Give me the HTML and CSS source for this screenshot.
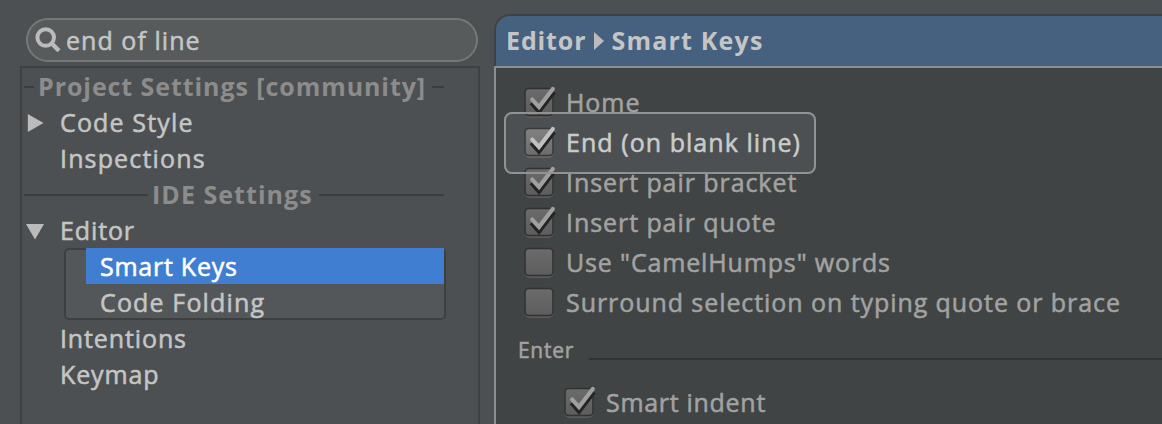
FILE: index.html
```html
<!DOCTYPE html>
<html lang="en">
<head>
<meta charset="utf-8">
<title>Settings</title>
<link rel="stylesheet" href="styles.css">
</head>
<body>
<svg class="defs" width="0" height="0" aria-hidden="true">
  <defs>
    <linearGradient id="face" x1="0" y1="0" x2="0" y2="1"><stop offset="0" stop-color="#6b6b6b"/><stop offset="1" stop-color="#5d5d5d"/></linearGradient>
    <linearGradient id="face-lit" x1="0" y1="0" x2="0" y2="1"><stop offset="0" stop-color="#818181"/><stop offset="1" stop-color="#6c6c6c"/></linearGradient>
    <symbol id="box" viewBox="0 0 34 34">
      <rect x="0.5" y="5" width="29" height="28" rx="5" fill="#595b5c"/>
      <rect x="1" y="3.5" width="28" height="27" rx="4" fill="url(#face)" stroke="#323232" stroke-width="1.6"/>
    </symbol>
    <symbol id="box-lit" viewBox="0 0 34 34">
      <rect x="0.5" y="5" width="29" height="28" rx="5" fill="#646768"/>
      <rect x="1" y="3.5" width="28" height="27" rx="4" fill="url(#face-lit)" stroke="#3a3a3a" stroke-width="1.6"/>
    </symbol>
    <symbol id="tick" viewBox="0 0 34 34">
      <path d="M7.3 17.9L15 26.6L30 6.8" fill="none" stroke="#242424" stroke-width="4.4"/>
      <path d="M8.2 14.6L15 22L28.8 4" fill="none" stroke="currentColor" stroke-width="4.2" stroke-linecap="round"/>
    </symbol>
  </defs>
</svg>
<div class="window">
  <aside class="side">
    <div class="search">
      <svg class="lens" width="26" height="26" viewBox="0 0 26 26"><circle cx="10.7" cy="10.5" r="8.3" fill="none" stroke="#bbb" stroke-width="4"/><path d="M16.3 16L24 23.8" stroke="#bbb" stroke-width="4.4"/></svg>
      <span>end of line</span>
    </div>
    <div class="tree">
      <div class="group project"><i class="rule stub"></i><span>Project Settings [community]</span><i class="rule"></i></div>
      <div class="node wide"><svg class="arrow" width="18" height="18" viewBox="0 0 18 18"><path d="M1.8 0L17.5 9L1.8 18Z" fill="#bbb"/></svg><span>Code Style</span></div>
      <div class="node wide"><span>Inspections</span></div>
      <div class="group ide"><i class="rule"></i><span>IDE Settings</span><i class="rule"></i></div>
      <div class="node"><svg class="arrow" width="18" height="18" viewBox="0 0 18 18"><path d="M0 2L18 2L9 17.5Z" fill="#bbb"/></svg><span>Editor</span></div>
      <div class="children">
        <div class="child selected">Smart Keys</div>
        <div class="child wide">Code Folding</div>
      </div>
      <div class="node"><span>Intentions</span></div>
      <div class="node"><span>Keymap</span></div>
    </div>
  </aside>
  <main class="panel">
    <header class="title"><span>Editor</span><svg width="10" height="18" viewBox="0 0 10 18"><path d="M0 0L10 9L0 18Z" fill="#bbb"/></svg><span class="crumb">Smart Keys</span></header>
    <div class="body">
      <label class="option"><svg class="check"><use href="#box"/><use href="#tick"/></svg><span>Home</span></label>
      <label class="option lit"><svg class="check"><use href="#box-lit"/><use href="#tick"/></svg><span>End (on blank line)</span></label>
      <label class="option"><svg class="check"><use href="#box"/><use href="#tick"/></svg><span>Insert pair bracket</span></label>
      <label class="option"><svg class="check"><use href="#box"/><use href="#tick"/></svg><span>Insert pair quote</span></label>
      <label class="option tight"><svg class="check"><use href="#box"/></svg><span>Use "CamelHumps" words</span></label>
      <label class="option"><svg class="check"><use href="#box"/></svg><span>Surround selection on typing quote or brace</span></label>
      <div class="section"><span>Enter</span><i></i></div>
      <label class="option nested"><svg class="check"><use href="#box"/><use href="#tick"/></svg><span>Smart indent</span></label>
    </div>
  </main>
</div>
</body>
</html>
```
FILE: styles.css
```css
* { box-sizing: border-box; }
body { margin: 0; background: #4c5052; }
.defs { position: absolute; }
.window {
  display: flex;
  width: 1162px;
  height: 424px;
  overflow: hidden;
  background: #4c5052;
  color: #c5c5c5;
  font: 25px/36px "Open Sans", "Noto Sans", sans-serif;
  letter-spacing: 0.88px;
  white-space: nowrap;
  -webkit-text-stroke: 0.55px currentColor;
}
.side { width: 494px; flex: none; padding: 18px 14px 0 20px; display: flex; flex-direction: column; }
.search {
  display: flex;
  align-items: center;
  width: 452px;
  height: 44px;
  margin-left: 6px;
  padding-left: 7px;
  gap: 5px;
  border: 2px solid #777;
  border-radius: 22px;
  background: #575b5b;
  letter-spacing: 1.05px;
}
.tree { width: 460px; flex: 1; margin-top: 4px; border: 2px solid #414141; border-bottom: 0; }
.group { display: flex; align-items: center; height: 36px; margin: 0 34px 0 2px; color: #8c8c8c; font-weight: 700; -webkit-text-stroke: 0; }
.project { letter-spacing: 0.93px; }
.ide { letter-spacing: 1.05px; }
.rule { flex: 1; height: 2px; margin-top: 2px; background: #3c3c3c; }
.stub { flex: 0 0 10px; }
.ide span { margin: 0 6px 0 4px; }
.ide .rule:first-child { flex: 0 0 124px; }
.project span { margin: 0 6px 0 4px; }
.node { display: flex; align-items: center; height: 36px; padding-left: 38px; }
.wide { letter-spacing: 1.15px; }
.arrow { margin: 1px 16px 0 -34px; }
.children {
  width: 382px;
  height: 72px;
  margin-left: 42px;
  border: 2px solid #3e4040;
  border-radius: 5px;
  background: #53575a;
}
.child { height: 36px; padding-left: 34px; }
.selected { margin: -2px 0 0 20px; padding-left: 14px; background: #407ed1; color: #fff; letter-spacing: 0.75px; }
.panel { flex: 1; margin-top: 14px; }
.title {
  display: flex;
  align-items: center;
  height: 52px;
  padding: 0 0 2px 10px;
  border: 2px solid #414141;
  border-width: 2px 0 0 2px;
  border-radius: 16px 0 0 0;
  background: #466080;
  font-weight: 700;
  -webkit-text-stroke: 0;
}
.title svg { margin: 2px 7px 0 8px; }
.crumb { letter-spacing: 1.2px; }
.body {
  height: 358px;
  padding: 14px 0 0 28px;
  border: 2px solid #8e8e8e;
  border-width: 2px 0 0 2px;
  background: #404444;
  color: #a2a2a2;
}
.option { display: flex; align-items: center; height: 40px; position: relative; letter-spacing: 0.93px; }
.option > * { position: relative; z-index: 1; }
.check { width: 34px; height: 34px; margin-right: 8px; flex: none; color: #a0a0a0; }
.tight { letter-spacing: 0.85px; }
.lit { color: #cbcbcb; letter-spacing: 1.05px; }
.lit .check { color: #c0c0c0; }
.lit::before, .lit::after { content: ""; box-sizing: border-box; position: absolute; left: -20px; top: -10px; width: 312px; height: 62px; border-radius: 8px; }
.lit::before { background: #4c5052; }
.lit::after { border: 2px solid #929292; z-index: 2; }
.section { display: flex; align-items: center; height: 60px; margin-left: -6px; padding-bottom: 4px; font-size: 21px; letter-spacing: 0.7px; }
.section i { flex: 1; height: 2px; margin: 18px 0 0 15px; background: #323232; }
.nested { padding-left: 40px; letter-spacing: 0.7px; }
```
